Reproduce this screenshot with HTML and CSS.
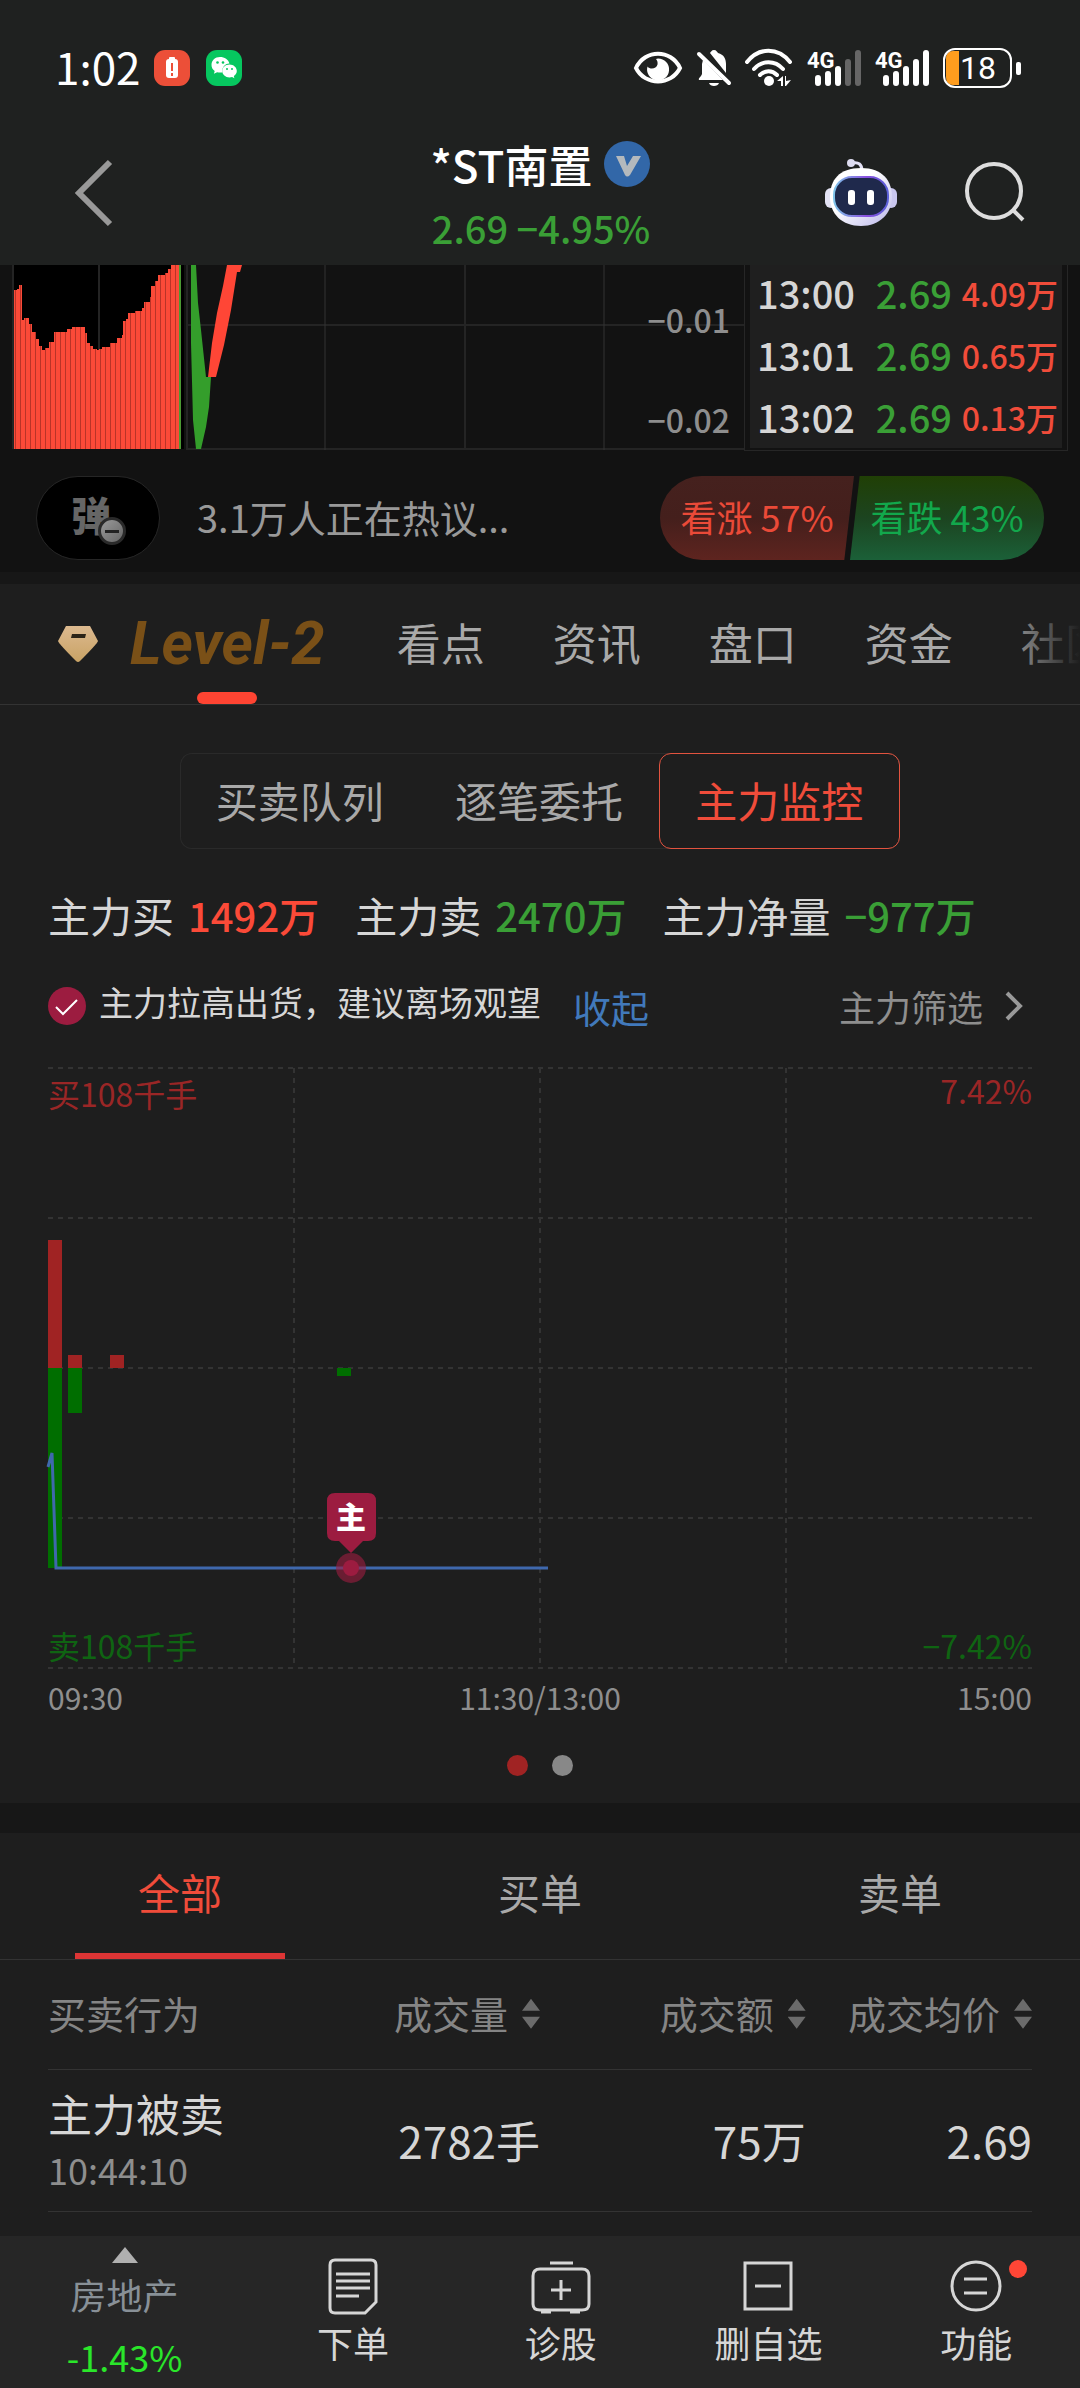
FILE: index.html
```html
<!DOCTYPE html>
<html lang="zh-CN">
<head>
    <meta charset="UTF-8">
    <meta name="viewport" content="width=device-width, initial-scale=1.0">
    <title>*ST南置 2.69 −4.95%</title>
    <link rel="stylesheet" href="styles.css">
</head>
<body>
    <div class="top">
        <div class="status">
            <span class="clock">1:02</span>
            <svg class="app-icon" width="36" height="36" viewBox="0 0 36 36">
                <rect width="36" height="36" rx="11" fill="#ec4f38"/>
                <rect x="15" y="7" width="6" height="3" rx="1" fill="#fff"/>
                <rect x="12" y="9" width="12" height="19" rx="3" fill="#fff"/>
                <path d="M18 13v8M18 23v3" stroke="#ec4f38" stroke-width="2"/>
            </svg>
            <svg class="app-icon" width="36" height="36" viewBox="0 0 36 36">
                <rect width="36" height="36" rx="11" fill="#06c75f"/>
                <path d="M14 7C9 7 5.500 10.500 5.500 15c0 2.500 1.200 4.600 3.200 6l-.8 2.800 3.200-1.600c1 .3 2 .4 3 .4l2-.2c-.3-6 4-9 7.400-8.800C22.500 9.500 18.500 7 14 7z" fill="#fff"/>
                <path d="M23.500 14.500c-4 0-7.300 2.900-7.300 6.500s3.300 6.400 7.300 6.400c.9 0 1.800-.1 2.600-.4l2.300 1.200-.6-2.200c1.900-1.300 3-3.100 3-5 0-3.600-3.300-6.500-7.300-6.500z" fill="#fff"/>
                <g fill="#06c75f"><circle cx="11.500" cy="12.500" r="1.300"/><circle cx="17" cy="12.500" r="1.300"/><circle cx="21" cy="19" r="1"/><circle cx="26" cy="19" r="1"/></g>
            </svg>
            <div class="status-right">
                <svg width="50" height="36" viewBox="0 0 50 36">
                    <path d="M3 18C12 -1 38 -1 47 18C38 36 12 36 3 18z" fill="none" stroke="#fff" stroke-width="4"/>
                    <path d="M25 8.500a11 11 0 1 1-10.500 8c2.500 3.500 9 2.500 10-2 .4-2-.2-4-1.500-5.500z" fill="#fff"/>
                </svg>
                <svg width="34" height="38" viewBox="0 0 34 38">
                    <path d="M13 4c1-1 1.500-3 4-3s3 2 4 3c6 1.500 8 6 8 11v9zM6 11l20 20H2c-1-2 2-3 3-6V15zM12 34h10c-1 4-9 4-10 0z" fill="#fff"/>
                    <path d="M2 5l30 29" stroke="#fff" stroke-width="4" stroke-linecap="round"/>
                </svg>
                <svg width="48" height="38" viewBox="0 0 48 38">
                    <g fill="none" stroke="#fff" stroke-width="4" stroke-linecap="round">
                        <path d="M2 13C14 -2 33 -2 45 13M9 20c8-9 21-9 29 0M15 26c5-5 12-5 17 0"/>
                    </g>
                    <circle cx="24" cy="32" r="5" fill="#fff"/>
                    <path d="M32 32l6-5v10h-2v-5zM41 27v5l5-1-5 6h-1V27z" fill="#fff"/>
                </svg>
                <svg class="signal" width="54" height="38" viewBox="0 0 54 38">
                    <text x="0" y="19">4G</text>
                    <path d="M11 29v5M21 25v9M31 20v14" stroke="#fff"/>
                    <path d="M41 13v21M51 4v30" stroke="#666"/>
                </svg>
                <svg class="signal" width="54" height="38" viewBox="0 0 54 38">
                    <text x="0" y="19">4G</text>
                    <path d="M11 29v5M21 25v9M31 20v14M41 13v21M51 4v30" stroke="#fff"/>
                </svg>
                <svg class="battery" width="78" height="40" viewBox="0 0 78 40">
                    <path d="M10 3h6v34h-6q-7 0-7-8V11q0-8 7-8z" fill="#ff9d1e"/>
                    <rect x="1" y="1" width="67" height="38" rx="11" fill="none" stroke="#fff" stroke-width="2"/>
                    <rect x="73" y="14" width="5" height="13" rx="2" fill="#fff"/>
                    <text x="35" y="31" text-anchor="middle">18</text>
                </svg>
            </div>
        </div>

        <header class="header">
            <button class="icon-btn back" aria-label="返回">
                <svg width="38" height="68" viewBox="0 0 38 68"><path d="M35 3L4 34l31 31" fill="none" stroke="#999" stroke-width="6"/></svg>
            </button>
            <div class="stock">
                <h1 class="stock-name">*ST南置
                    <svg width="47" height="47" viewBox="0 0 47 47">
                        <circle cx="23" cy="23" r="23" fill="#3267a8"/>
                        <path d="M12 15h8l3 10 6-10h8L26 34q-3 3-5 0z" fill="#b4b9bd"/>
                    </svg>
                </h1>
                <div class="stock-price">2.69 −4.95%</div>
            </div>
            <div class="header-actions">
                <button class="icon-btn" aria-label="智能助手">
                    <svg width="72" height="68" viewBox="0 0 72 68">
                        <defs>
                            <linearGradient id="shell" x1="0" y1="0" x2="1" y2="1"><stop offset="0.400" stop-color="#fff"/><stop offset="1" stop-color="#b9b6ea"/></linearGradient>
                            <linearGradient id="rim" x1="0" y1="0" x2="1" y2="0"><stop offset="0" stop-color="#7fc4ea"/><stop offset="0.600" stop-color="#8a4fe0"/><stop offset="1" stop-color="#5960d8"/></linearGradient>
                        </defs>
                        <path d="M27 5q10-2 10 8" fill="none" stroke="#e4e2f6" stroke-width="3"/>
                        <circle cx="26" cy="5" r="4" fill="#dddcf0"/>
                        <rect x="0" y="30" width="12" height="20" rx="6" fill="#e3e3f4"/>
                        <rect x="60" y="30" width="12" height="20" rx="6" fill="#c9c7ef"/>
                        <path d="M36 10c22 0 31 13 31 29S55 68 36 68 5 56 5 39s9-29 31-29z" fill="url(#shell)"/>
                        <rect x="9" y="19" width="54" height="39" rx="18" fill="#1f294c" stroke="url(#rim)" stroke-width="2"/>
                        <rect x="23" y="32" width="7" height="15" rx="3" fill="#fff"/>
                        <rect x="42" y="32" width="7" height="15" rx="3" fill="#fff"/>
                    </svg>
                </button>
                <button class="icon-btn" aria-label="搜索">
                    <svg width="60" height="60" viewBox="0 0 60 60"><circle cx="29" cy="29" r="27" fill="none" stroke="#ddd" stroke-width="4"/><path d="M48 48l10 10" stroke="#ddd" stroke-width="4"/></svg>
                </button>
            </div>
        </header>
    </div>

    <section class="quote">
        <svg class="quote-chart" viewBox="0 0 744 185">
            <defs>
                <pattern id="stripes" width="5" height="10" patternUnits="userSpaceOnUse">
                    <rect width="5" height="10" fill="#fb4a38"/>
                    <rect width="1" height="10" fill="#b93428"/>
                </pattern>
            </defs>
            <rect x="13" width="171" height="184" fill="#000"/>
            <path class="grid-line" d="M13 0v184M99 0v184M187 0v185M465 0v185M187 60H744M186 184H744"/>
            <path class="grid-line-thin" d="M325 0v185M604 0v185"/>
            <path fill="url(#stripes)" d="M14 184V25h3v-1h2v-4h3v35h2v-2h5v6h3v8h4v7h3v7h3v4h3v-2h4v-6h5V67h13v-3h5v-2h13v6h2v10h3v3h3v3h4v1h2v-1h3v-2h8v-4h7v-5h5v-3h1V56h3v-2h2v-6h7v-2h7v-3h2v-6h6v-5h1V21h4v-5h3v-6h7V8h3V4h3V0h10v184z"/>
            <path d="M180 0v184" stroke="#4b9a33" stroke-width="2"/>
            <path fill="#349e2b" d="M191 0h5l2 38 3 27 5 47h5l-2 30-3 20-5 22h-5l-3-29-2-77z"/>
            <path fill="#ff4636" d="M227 0h15l-2 7h-3l-6 38-7 35-8 32h-8l4-34 5-30 6-27z"/>
            <text x="730" y="68">−0.01</text>
            <text x="730" y="168">−0.02</text>
        </svg>
        <div class="ticks-box">
            <table class="ticks">
                <tr><td>13:00</td><td class="green">2.69</td><td class="vol">4.09万</td></tr>
                <tr><td>13:01</td><td class="green">2.69</td><td class="vol">0.65万</td></tr>
                <tr><td>13:02</td><td class="green">2.69</td><td class="vol">0.13万</td></tr>
            </table>
        </div>
    </section>

    <section class="discuss">
        <button class="danmu" aria-label="弹幕开关"><span class="danmu-text">弹<i class="danmu-badge"></i></span></button>
        <a class="discuss-text" href="#">3.1万人正在热议...</a>
        <div class="vote">
            <button class="vote-up">看涨 57%</button>
            <button class="vote-down">看跌 43%</button>
        </div>
    </section>

    <nav class="tabs">
        <svg class="diamond" width="40" height="36" viewBox="0 0 40 36">
            <defs><linearGradient id="gold" x1="0" y1="0" x2="0" y2="1"><stop offset="0" stop-color="#dcb98f"/><stop offset="1" stop-color="#c9a365"/></linearGradient></defs>
            <path d="M8 0h24l8 15q-1 3-18 20-2 2-4 0Q1 18 0 15z" fill="url(#gold)"/>
            <path d="M14 8h14l-1 4H13z" fill="#2c2417"/>
        </svg>
        <a class="tab level2" href="#">Level-2</a>
        <a class="tab" href="#">看点</a>
        <a class="tab" href="#">资讯</a>
        <a class="tab" href="#">盘口</a>
        <a class="tab" href="#">资金</a>
        <a class="tab" href="#">社区</a>
    </nav>

    <section class="monitor">
        <div class="segment">
            <button>买卖队列</button>
            <button>逐笔委托</button>
            <button class="on">主力监控</button>
        </div>

        <div class="sums">
            <div class="sum">主力买<b class="red">1492万</b></div>
            <div class="sum">主力卖<b class="green">2470万</b></div>
            <div class="sum">主力净量<b class="green">−977万</b></div>
        </div>

        <div class="advice">
            <svg width="39" height="39" viewBox="0 0 39 39"><circle cx="19" cy="19" r="19" fill="#9c1c40"/><path d="M8 20l7 7 14-14" fill="none" stroke="#fff" stroke-width="2"/></svg>
            <span class="advice-text">主力拉高出货，建议离场观望</span>
            <button class="fold">收起</button>
            <button class="filter">主力筛选
                <svg width="18" height="30" viewBox="0 0 18 30"><path d="M2 2l13 13L2 28" fill="none" stroke="#999" stroke-width="4"/></svg>
            </button>
        </div>

        <svg class="flow-chart" viewBox="0 0 984 602">
            <path class="dash" d="M0 1H984M0 151H984M0 301H984M0 451H984M0 601H984M246 1V601M492 1V601M738 1V601"/>
            <g fill="#a02323">
                <rect x="0" y="173" width="14" height="128"/>
                <rect x="20" y="288" width="14" height="13"/>
                <rect x="62" y="288" width="14" height="13"/>
            </g>
            <g fill="#006e00">
                <rect x="0" y="301" width="14" height="200"/>
                <rect x="20" y="301" width="14" height="45"/>
                <rect x="289" y="301" width="14" height="8"/>
            </g>
            <path d="M0 400l4-14 4 115H500" fill="none" stroke="#3f68ad" stroke-width="3"/>
            <circle cx="303" cy="501" r="15" fill="#9c1c40" fill-opacity="0.600"/>
            <circle cx="303" cy="501" r="8" fill="#9c1c40"/>
            <path d="M287 426h33q8 0 8 8v32q0 8-8 8h-5l-12 12-12-12h-4q-8 0-8-8v-32q0-8 8-8z" fill="#9c1c40"/>
            <text class="flag" x="303" y="461" text-anchor="middle">主</text>
            <text x="0" y="40" fill="#9a2626">买108千手</text>
            <text x="984" y="37" fill="#9a2626" text-anchor="end">7.42%</text>
            <text x="0" y="592" fill="#0f6412">卖108千手</text>
            <text x="984" y="592" fill="#0f6412" text-anchor="end">−7.42%</text>
        </svg>
        <div class="axis"><span>09:30</span><span>11:30/13:00</span><span>15:00</span></div>
        <div class="dots"><i class="on"></i><i></i></div>
    </section>

    <section class="orders">
        <div class="order-tabs">
            <button class="on">全部</button>
            <button>买单</button>
            <button>卖单</button>
        </div>
        <table class="order-table">
            <thead>
                <tr>
                    <th class="act">买卖行为</th>
                    <th class="amount">成交量<i class="sort"></i></th>
                    <th class="money">成交额<i class="sort"></i></th>
                    <th class="avg">成交均价<i class="sort"></i></th>
                </tr>
            </thead>
            <tbody>
                <tr>
                    <td>主力被卖<span class="time">10:44:10</span></td>
                    <td>2782手</td>
                    <td>75万</td>
                    <td>2.69</td>
                </tr>
            </tbody>
        </table>
    </section>

    <nav class="bottom">
        <a class="sector" href="#">
            <svg width="26" height="16" viewBox="0 0 26 16"><path d="M13 0l13 16H0z" fill="#b0b0b0"/></svg>
            <span>房地产</span>
            <span class="sector-change">-1.43%</span>
        </a>
        <a class="item" href="#">
            <svg width="58" height="58" viewBox="0 0 58 58"><path d="M11 3h36q5 0 5 5v37L41 56H11q-5 0-5-5V8q0-5 5-5zM12 17h34M12 24h34M12 31h34M12 39h23"/></svg>
            下单
        </a>
        <a class="item" href="#">
            <svg width="58" height="58" viewBox="0 0 58 58"><path d="M18 6h23M8 12h42q7 0 7 7v28q0 6-7 6H8q-7 0-7-6V19q0-7 7-7zM29 23v20M19 33h20M9 55h10M38 55h10"/></svg>
            诊股
        </a>
        <a class="item" href="#">
            <svg width="58" height="58" viewBox="0 0 58 58"><path d="M6 6h46v46H6zM16 29h26"/></svg>
            删自选
        </a>
        <a class="item" href="#">
            <svg width="58" height="58" viewBox="0 0 58 58"><circle cx="29" cy="29" r="24"/><path d="M17 22h23M17 36h23"/></svg>
            功能
            <i class="red-dot"></i>
        </a>
    </nav>
</body>
</html>
```

FILE: styles.css
```css
* {
    box-sizing: border-box;
}

body {
    margin: 0;
    background: #171717;
    color: #d6d6d6;
    font-family: "Noto Sans CJK SC", sans-serif;
    overflow-x: hidden;
}

button {
    padding: 0;
    border: none;
    background: none;
    color: inherit;
    font: inherit;
    cursor: pointer;
}

a {
    color: inherit;
    text-decoration: none;
}

svg {
    display: block;
    flex-shrink: 0;
    overflow: visible;
}

.red {
    color: #fb4a38;
}

.green {
    color: #3a9f36;
}

/* status bar and title */
.top {
    background: #1f2120;
}

.status {
    display: flex;
    align-items: center;
    height: 132px;
    padding: 4px 59px 0 55px;
    color: #fff;
}

.clock {
    margin-right: 13px;
    font-size: 44px;
    line-height: 64px;
    padding-bottom: 4px;
}

.app-icon {
    margin-right: 16px;
}

.status-right {
    display: flex;
    align-items: center;
    gap: 14px;
    margin-left: auto;
}

.signal {
    fill: none;
    stroke-width: 6;
    stroke-linecap: round;
}

.signal text {
    fill: #fff;
    font-family: Roboto, sans-serif;
    font-size: 22px;
    font-weight: 700;
}

.battery text {
    fill: #fff;
    font-family: Roboto, sans-serif;
    font-size: 32px;
}

.header {
    display: grid;
    grid-template-columns: 1fr auto 1fr;
    height: 133px;
    padding: 0 55px 0 75px;
}

.icon-btn {
    display: flex;
    align-items: center;
}

.back {
    height: 122px;
}

.stock {
    text-align: center;
    margin-left: -18px;
}

.stock-name {
    display: flex;
    align-items: center;
    justify-content: center;
    gap: 12px;
    margin: 0;
    color: #fff;
    font-size: 44px;
    font-weight: 500;
    line-height: 64px;
}

.stock-price {
    color: #3a9f36;
    font-size: 38px;
    font-weight: 500;
    line-height: 64px;
}

.header-actions {
    display: flex;
    justify-content: flex-end;
    gap: 68px;
    height: 120px;
}

/* intraday chart and ticks */
.quote {
    display: grid;
    grid-template-columns: minmax(0, 744fr) minmax(0, 324fr);
    background: #121212;
    padding-right: 12px;
}

.quote-chart {
    width: 100%;
}

.grid-line {
    fill: none;
    stroke: #242424;
    stroke-width: 2;
}

.grid-line-thin {
    fill: none;
    stroke: #333;
}

.quote-chart text {
    fill: #8e8e8e;
    font-size: 32px;
    font-weight: 500;
    text-anchor: end;
}

.ticks-box {
    display: flex;
    align-items: flex-end;
    height: 186px;
    padding: 0 5px 2px;
    border: 1px solid #262626;
    border-top: none;
    overflow: hidden;
}

.ticks {
    width: 100%;
    border-collapse: collapse;
    background: #1f1f1f;
    font-size: 38px;
    font-weight: 500;
    line-height: 62px;
    white-space: nowrap;
}

.ticks td {
    padding: 0 0 0 7px;
}

.ticks .green {
    text-align: right;
}

.ticks .vol {
    width: 110px;
    padding-right: 4px;
    color: #f04c3a;
    font-size: 32px;
    text-align: right;
}

/* discussion bar */
.discuss {
    display: flex;
    align-items: center;
    height: 121px;
    margin-bottom: 12px;
    padding: 13px 36px 0;
    background: #121212;
}

.danmu {
    width: 124px;
    height: 84px;
    margin-right: 37px;
    padding: 0 14px 8px 0;
    border: 1px solid #262626;
    border-radius: 42px;
    background: #000;
    color: #666;
    font-size: 40px;
    font-weight: 900;
}

.danmu-text {
    position: relative;
}

.danmu-badge {
    position: absolute;
    right: -15px;
    bottom: -2px;
    display: flex;
    align-items: center;
    justify-content: center;
    width: 28px;
    height: 28px;
    border: 3px solid #2a2a2a;
    border-radius: 50%;
    background: linear-gradient(135deg, #999, #666);
}

.danmu-badge::after {
    content: "";
    width: 14px;
    height: 3px;
    background: #222;
}

.discuss-text {
    padding-bottom: 4px;
    color: #999;
    font-size: 38px;
}

.vote {
    display: flex;
    width: 384px;
    margin-left: auto;
    font-size: 36px;
}

.vote button {
    height: 84px;
    padding-bottom: 4px;
}

.vote-up {
    flex: 1;
    margin-right: -4px;
    border-radius: 42px 0 0 42px;
    background: linear-gradient(#45211e, #441f1c 50%, #5e241f);
    color: #ea4a38;
    clip-path: polygon(0 0, 100% 0, 95% 100%, 0 100%);
}

.vote-down {
    flex: 1;
    border-radius: 0 42px 42px 0;
    background: linear-gradient(#203f05, #1c4420 50%, #1b6038);
    color: #12a84c;
    clip-path: polygon(5% 0, 100% 0, 100% 100%, 0 100%);
}

/* main tabs */
.tabs {
    position: relative;
    display: flex;
    align-items: center;
    height: 121px;
    padding-left: 58px;
    border-bottom: 1px solid #333;
    background: #1e1e1e;
    overflow: hidden;
    white-space: nowrap;
}

.tabs::after {
    content: "";
    position: absolute;
    top: 0;
    right: 0;
    width: 80px;
    height: 100%;
    background: linear-gradient(90deg, transparent, #1e1e1e);
}

.diamond {
    margin-right: 32px;
}

.tab {
    margin-right: 68px;
    padding-bottom: 4px;
    color: #a9a9a9;
    font-size: 44px;
    line-height: 116px;
}

.level2 {
    position: relative;
    margin-right: 72px;
    padding-bottom: 0;
    color: #7a5017;
    font-family: Roboto, sans-serif;
    font-size: 60px;
    font-style: italic;
    font-weight: 700;
    line-height: 120px;
}

.level2::after {
    content: "";
    position: absolute;
    left: 50%;
    bottom: 0;
    width: 60px;
    height: 12px;
    margin-left: -30px;
    border-radius: 6px;
    background: #ff4432;
}

/* main force monitor */
.monitor {
    padding: 48px 48px 27px;
    background: #1e1e1e;
}

.segment {
    display: flex;
    width: 720px;
    max-width: 100%;
    margin: 0 auto;
    border-radius: 12px;
    box-shadow: inset 0 0 0 1px #2a2a2a;
    color: #a9a9a9;
    font-size: 42px;
}

.segment button {
    flex: 1;
    height: 96px;
    padding-bottom: 4px;
}

.segment .on {
    border: 1px solid #e2533f;
    border-radius: 12px;
    color: #f04c3a;
}

.sums {
    display: flex;
    gap: 36px;
    margin-top: 34px;
    font-size: 42px;
    line-height: 64px;
    white-space: nowrap;
}

.sum {
    display: flex;
    gap: 14px;
}

.sum b {
    font-size: 40px;
    font-weight: 500;
}

.advice {
    display: flex;
    align-items: center;
    margin-top: 27px;
    height: 64px;
    white-space: nowrap;
}

.advice-text {
    margin-left: 12px;
    font-size: 34px;
    padding-bottom: 10px;
}

.fold {
    margin-left: 32px;
    color: #4179bb;
    font-size: 38px;
}

.filter {
    display: flex;
    align-items: center;
    gap: 22px;
    margin-left: auto;
    padding-right: 9px;
    color: #8e8e8e;
    font-size: 36px;
}

.flow-chart {
    width: 100%;
    margin-top: 29px;
    font-size: 32px;
}

.dash {
    fill: none;
    stroke: #333;
    stroke-width: 2;
    stroke-dasharray: 5 5;
}

.flag {
    fill: #fff;
    font-size: 30px;
    font-weight: 900;
}

.axis {
    display: flex;
    justify-content: space-between;
    color: #8e8e8e;
    font-size: 30px;
    line-height: 56px;
}

.dots {
    display: flex;
    justify-content: center;
    gap: 24px;
    margin-top: 30px;
}

.dots i {
    width: 21px;
    height: 21px;
    border-radius: 50%;
    background: #888;
}

.dots .on {
    background: #a02323;
}

/* orders list */
.orders {
    margin-top: 30px;
    padding-bottom: 24px;
    background: #1e1e1e;
}

.order-tabs {
    display: flex;
    border-bottom: 1px solid #333;
    color: #a9a9a9;
    font-size: 42px;
}

.order-tabs button {
    position: relative;
    flex: 1;
    height: 126px;
    padding-bottom: 10px;
}

.order-tabs .on {
    color: #f04c3a;
}

.order-tabs .on::after {
    content: "";
    position: absolute;
    left: 75px;
    right: 75px;
    bottom: 0;
    height: 6px;
    background: #dc3535;
}

.order-table {
    width: calc(100% - 96px);
    margin: 0 48px;
    border-collapse: collapse;
    table-layout: fixed;
    text-align: right;
    white-space: nowrap;
}

.order-table th {
    height: 109px;
    padding: 0 0 4px;
    border-bottom: 1px solid #333;
    color: #858585;
    font-size: 38px;
    font-weight: 400;
    text-align: right;
}

.order-table td {
    height: 142px;
    padding: 0;
    border-bottom: 1px solid #333;
    font-size: 44px;
    line-height: 58px;
}

.order-table .act,
.order-table td:first-child {
    width: 25%;
    text-align: left;
}

.order-table .amount {
    width: 25%;
}

.order-table .money {
    width: 27%;
}

.order-table .avg {
    width: 23%;
}

.time {
    display: block;
    color: #8e8e8e;
    font-size: 36px;
    line-height: 54px;
}

/* up and down arrows after a sortable column name */
.sort {
    display: inline-block;
    width: 18px;
    height: 30px;
    margin-left: 14px;
    background: #6b6b6b;
    clip-path: polygon(50% 0, 100% 40%, 0 40%, 0 60%, 100% 60%, 50% 100%, 0 60%, 0 40%);
}

/* bottom bar */
.bottom {
    display: flex;
    height: 153px;
    background: #262626;
    font-size: 36px;
}

.sector {
    flex: 6;
    display: flex;
    flex-direction: column;
    align-items: center;
    padding-top: 11px;
    color: #889097;
    line-height: 62px;
}

.sector-change {
    color: #2ae62a;
}

.item {
    position: relative;
    flex: 5;
    display: flex;
    flex-direction: column;
    align-items: center;
    padding-top: 21px;
    line-height: 54px;
}

.item svg {
    fill: none;
    stroke: #d6d6d6;
    stroke-width: 3;
}

.red-dot {
    position: absolute;
    top: 24px;
    left: 50%;
    width: 18px;
    height: 18px;
    margin-left: 33px;
    border-radius: 50%;
    background: #ff4636;
}
```
